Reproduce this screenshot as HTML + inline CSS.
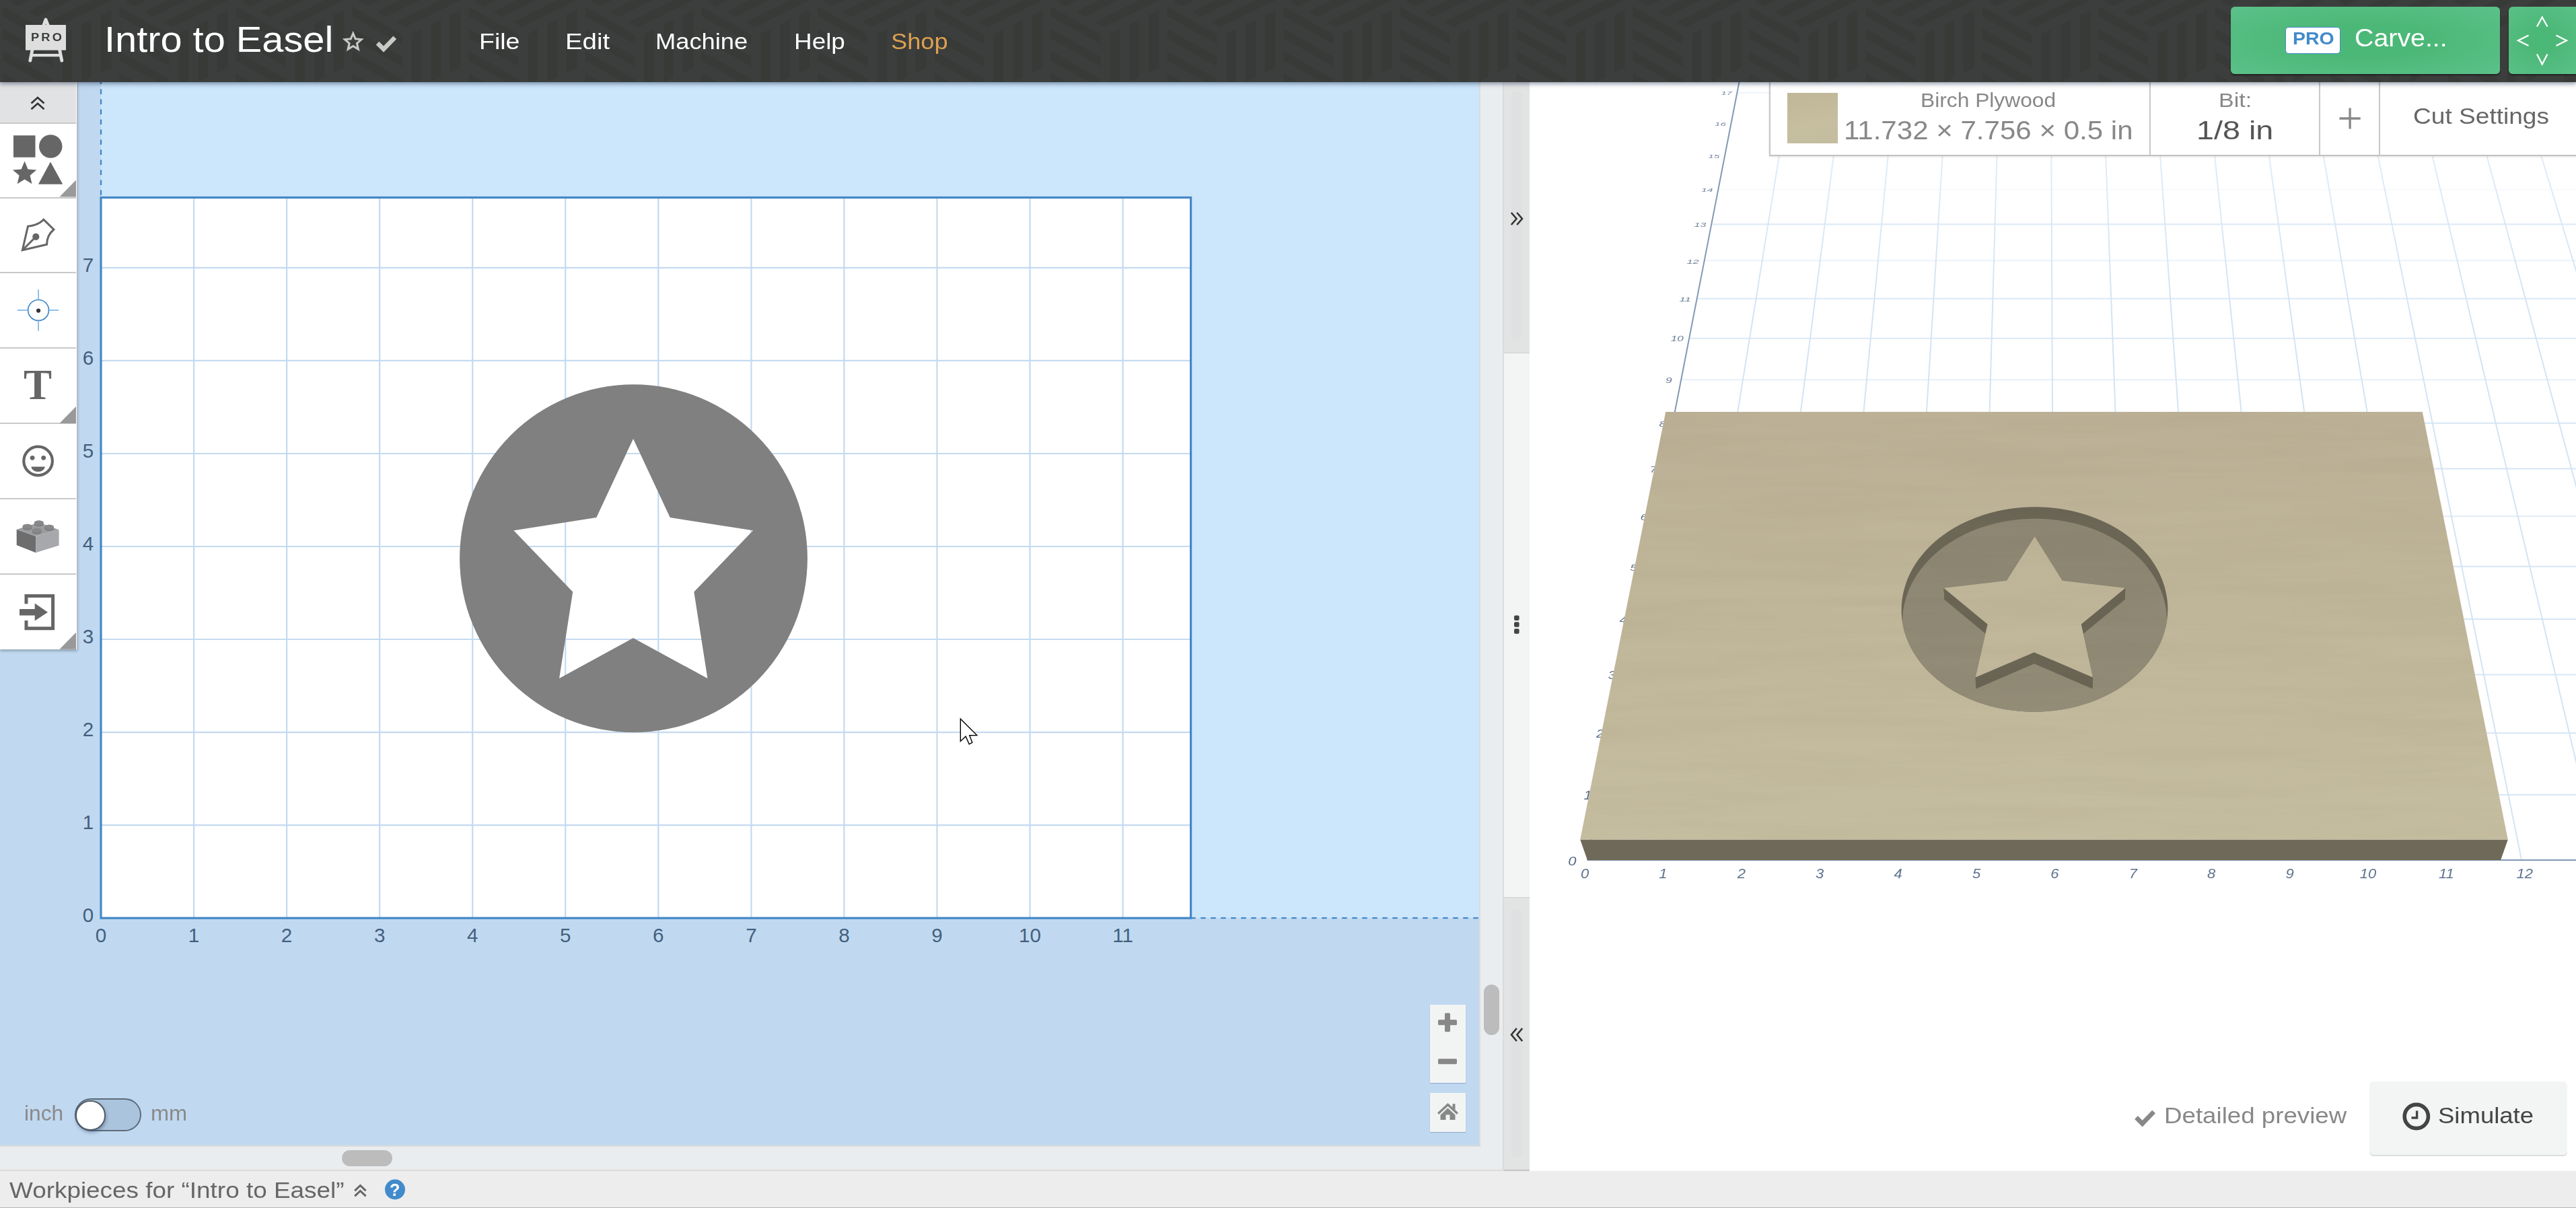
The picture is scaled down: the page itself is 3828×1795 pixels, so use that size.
<!DOCTYPE html>
<html><head><meta charset="utf-8"><title>Intro to Easel</title>
<style>
html,body{margin:0;padding:0}
body{width:3828px;height:1795px;position:relative;overflow:hidden;background:#fff;font-family:'Liberation Sans',sans-serif}
.t{position:absolute;white-space:nowrap;line-height:1;transform-origin:0 50%;display:inline-block}
.abs{position:absolute}

</style></head>
<body>
<svg id="design" style="position:absolute;left:0;top:122px" width="2199" height="1580" viewBox="0 122 2199 1580">
<rect x="0" y="122" width="2199" height="1580" fill="#cce6fb"/>
<rect x="0" y="122" width="150" height="1580" fill="#c0d9f0"/>
<rect x="0" y="1364.2" width="2199" height="337.8" fill="#c0d9f0"/>
<rect x="150.0" y="293.5" width="1619.6" height="1070.7" fill="#fff"/>
<path d="M288.1 293.5V1364.2M426.1 293.5V1364.2M564.2 293.5V1364.2M702.2 293.5V1364.2M840.2 293.5V1364.2M978.3 293.5V1364.2M1116.4 293.5V1364.2M1254.4 293.5V1364.2M1392.5 293.5V1364.2M1530.5 293.5V1364.2M1668.6 293.5V1364.2M150.0 1226.2H1769.6M150.0 1088.1H1769.6M150.0 950.0H1769.6M150.0 812.0H1769.6M150.0 674.0H1769.6M150.0 535.9H1769.6M150.0 397.8H1769.6" stroke="#c4daf0" stroke-width="2.2" fill="none"/>
<path fill="#808080" fill-rule="evenodd" d="M683.1 829.7a258.4 258.4 0 1 0 516.8 0a258.4 258.4 0 1 0 -516.8 0ZM941.0 651.9L995.7 769.0L1119.1 788.2L1031.3 879.4L1051.4 1008.1L941.0 948.1L831.1 1008.1L851.2 879.4L763.4 788.2L886.3 769.0Z"/>
<rect x="150.0" y="293.5" width="1619.6" height="1070.7" fill="none" stroke="#4487c7" stroke-width="3.2"/>
<path d="M150.0 122V293.5" stroke="#4487c7" stroke-width="2.3" stroke-dasharray="7.5 7.5" stroke-dashoffset="4.5" fill="none"/>
<path d="M1769.6 1364.2H2199" stroke="#4487c7" stroke-width="2.3" stroke-dasharray="7.5 7.5" stroke-dashoffset="0.4" fill="none"/>
<g font-family="Liberation Sans, sans-serif" font-size="29.6" fill="#44607f">
<g text-anchor="middle">
<text x="150.0" y="1400">0</text>
<text x="288.1" y="1400">1</text>
<text x="426.1" y="1400">2</text>
<text x="564.2" y="1400">3</text>
<text x="702.2" y="1400">4</text>
<text x="840.2" y="1400">5</text>
<text x="978.3" y="1400">6</text>
<text x="1116.4" y="1400">7</text>
<text x="1254.4" y="1400">8</text>
<text x="1392.5" y="1400">9</text>
<text x="1530.5" y="1400">10</text>
<text x="1668.6" y="1400">11</text>
</g><g text-anchor="end">
<text x="139.3" y="1370.4">0</text>
<text x="139.3" y="1232.4">1</text>
<text x="139.3" y="1094.3">2</text>
<text x="139.3" y="956.2">3</text>
<text x="139.3" y="818.2">4</text>
<text x="139.3" y="680.2">5</text>
<text x="139.3" y="542.1">6</text>
<text x="139.3" y="404.0">7</text>
</g></g>
<path d="M1427.3 1068.3V1101.5L1435.1 1094.2L1440.2 1105.8L1444.8 1103.5L1440.7 1092.7L1451.7 1092.5Z" fill="#fff" stroke="#000" stroke-width="1.4" stroke-linejoin="miter"/>
</svg>
<svg id="view3d" style="position:absolute;left:2273px;top:122px;filter:blur(0.6px)" width="1555" height="1618" viewBox="2273 122 1555 1618">
<defs>
<linearGradient id="wood" gradientUnits="userSpaceOnUse" x1="0" y1="612" x2="0" y2="1248"><stop offset="0" stop-color="#bbb095"/><stop offset="0.45" stop-color="#bfb599"/><stop offset="1" stop-color="#c5bda0"/></linearGradient>
<linearGradient id="pfloor" gradientUnits="userSpaceOnUse" x1="0" y1="770" x2="0" y2="1060"><stop offset="0" stop-color="#8b8471"/><stop offset="1" stop-color="#928b76"/></linearGradient>
<clipPath id="rimclip"><polygon points="3221.2,898.0 3220.4,890.1 3219.1,882.2 3217.3,874.4 3215.0,866.7 3212.2,859.2 3208.9,851.8 3205.1,844.5 3200.8,837.4 3196.1,830.6 3190.9,823.9 3185.3,817.5 3179.3,811.2 3172.9,805.3 3166.2,799.6 3159.1,794.2 3151.6,789.1 3143.8,784.3 3135.8,779.8 3127.5,775.7 3118.9,771.9 3110.1,768.4 3101.1,765.2 3091.8,762.4 3082.5,760.0 3073.0,758.0 3063.4,756.3 3053.6,755.0 3043.9,754.0 3034.0,753.4 3024.2,753.3 3014.3,753.4 3004.5,754.0 2994.7,755.0 2984.9,756.3 2975.3,758.0 2965.8,760.0 2956.4,762.4 2947.2,765.2 2938.1,768.4 2929.3,771.9 2920.7,775.7 2912.3,779.8 2904.2,784.3 2896.4,789.1 2888.9,794.2 2881.7,799.6 2874.9,805.3 2868.5,811.2 2862.4,817.5 2856.8,823.9 2851.5,830.6 2846.7,837.4 2842.4,844.5 2838.5,851.8 2835.1,859.2 2832.3,866.7 2829.9,874.4 2828.0,882.2 2826.7,890.1 2825.8,898.0 2825.6,906.0 2825.8,913.9 2826.7,921.9 2828.0,929.9 2829.9,937.8 2832.4,945.6 2835.4,953.4 2839.0,961.0 2843.1,968.5 2847.7,975.8 2852.8,983.0 2858.4,989.9 2864.6,996.6 2871.2,1003.0 2878.2,1009.2 2885.7,1015.1 2893.6,1020.7 2901.9,1025.9 2910.6,1030.8 2919.7,1035.3 2929.0,1039.5 2938.7,1043.2 2948.6,1046.5 2958.8,1049.5 2969.1,1051.9 2979.6,1054.0 2990.3,1055.6 3001.1,1056.7 3011.9,1057.4 3022.8,1057.7 3033.7,1057.4 3044.5,1056.7 3055.3,1055.6 3066.0,1054.0 3076.5,1051.9 3086.9,1049.5 3097.1,1046.5 3107.0,1043.2 3116.7,1039.5 3126.1,1035.3 3135.2,1030.8 3143.9,1025.9 3152.3,1020.7 3160.2,1015.1 3167.8,1009.2 3174.9,1003.0 3181.6,996.6 3187.7,989.9 3193.4,983.0 3198.6,975.8 3203.3,968.5 3207.5,961.0 3211.1,953.4 3214.2,945.6 3216.7,937.8 3218.7,929.9 3220.1,921.9 3221.0,913.9 3221.4,906.0"/></clipPath>
<clipPath id="topclip"><polygon points="2348.2,1247.5 3726.8,1247.5 3599.8,612.0 2475.2,612.0"/></clipPath>
<filter id="grain" x="0" y="0" width="100%" height="100%" color-interpolation-filters="sRGB"><feTurbulence type="fractalNoise" baseFrequency="0.0035 0.045" numOctaves="3" seed="7"/><feColorMatrix type="matrix" values="0 0 0 0 0.42  0 0 0 0 0.36  0 0 0 0 0.25  0.085 0 0 0 -0.03"/></filter>
<filter id="grain2" x="0" y="0" width="100%" height="100%" color-interpolation-filters="sRGB"><feTurbulence type="fractalNoise" baseFrequency="0.002 0.03" numOctaves="2" seed="11"/><feColorMatrix type="matrix" values="0 0 0 0 0.93  0 0 0 0 0.9  0 0 0 0 0.8  0.065 0 0 0 -0.026"/></filter>
<linearGradient id="fade" x1="0" y1="0" x2="0" y2="1"><stop offset="0" stop-color="#fff" stop-opacity="0.45"/><stop offset="1" stop-color="#fff" stop-opacity="0"/></linearGradient>
</defs>
<path d="M2474.5 1278.0L2673.1 51.1M2590.2 1278.0L2748.0 51.1M2705.9 1278.0L2822.9 51.1M2821.6 1278.0L2897.8 51.1M2937.3 1278.0L2972.7 51.1M3053.0 1278.0L3047.5 51.1M3168.7 1278.0L3122.4 51.1M3284.4 1278.0L3197.3 51.1M3400.1 1278.0L3272.2 51.1M3515.8 1278.0L3347.1 51.1M3631.5 1278.0L3421.9 51.1M3747.2 1278.0L3496.8 51.1M3862.8 1278.0L3571.7 51.1M3978.5 1278.0L3646.6 51.1M4094.2 1278.0L3721.4 51.1M4209.9 1278.0L3796.3 51.1M4325.6 1278.0L3871.2 51.1M4441.3 1278.0L3946.1 51.1M4557.0 1278.0L4021.0 51.1" stroke="#d4e4f4" stroke-width="2" fill="none"/>
<path d="M2377.8 1181.0L4514.6 1181.0" stroke="#d4e4f4" stroke-width="2" stroke-opacity="0.95" fill="none"/>
<path d="M2395.7 1089.3L4474.5 1089.3" stroke="#d4e4f4" stroke-width="2" stroke-opacity="0.95" fill="none"/>
<path d="M2412.6 1002.4L4436.6 1002.4" stroke="#d4e4f4" stroke-width="2" stroke-opacity="0.95" fill="none"/>
<path d="M2428.7 920.0L4400.6 920.0" stroke="#d4e4f4" stroke-width="2" stroke-opacity="0.95" fill="none"/>
<path d="M2444.0 841.7L4366.4 841.7" stroke="#d4e4f4" stroke-width="2" stroke-opacity="0.95" fill="none"/>
<path d="M2458.5 767.3L4333.9 767.3" stroke="#d4e4f4" stroke-width="2" stroke-opacity="0.70" fill="none"/>
<path d="M2472.3 696.4L4302.9 696.4" stroke="#d4e4f4" stroke-width="2" stroke-opacity="0.95" fill="none"/>
<path d="M2485.5 628.8L4273.4 628.8" stroke="#d4e4f4" stroke-width="2" stroke-opacity="0.95" fill="none"/>
<path d="M2498.1 564.3L4245.2 564.3" stroke="#d4e4f4" stroke-width="2" stroke-opacity="0.55" fill="none"/>
<path d="M2510.1 502.7L4218.3 502.7" stroke="#d4e4f4" stroke-width="2" stroke-opacity="0.85" fill="none"/>
<path d="M2521.6 443.8L4192.5 443.8" stroke="#d4e4f4" stroke-width="2" stroke-opacity="0.85" fill="none"/>
<path d="M2532.6 387.3L4167.9 387.3" stroke="#d4e4f4" stroke-width="2" stroke-opacity="0.50" fill="none"/>
<path d="M2543.2 333.3L4144.3 333.3" stroke="#d4e4f4" stroke-width="2" stroke-opacity="1.00" fill="none"/>
<path d="M2553.3 281.4L4121.6 281.4" stroke="#d4e4f4" stroke-width="2" stroke-opacity="0.25" fill="none"/>
<path d="M2581.3 137.9L4058.9 137.9" stroke="#d4e4f4" stroke-width="2" stroke-opacity="0.70" fill="none"/>
<rect x="2273" y="122" width="1555" height="330" fill="url(#fade)"/>
<path d="M2358.9 1278.0L2598.3 51.1M2358.9 1278.0L4557.0 1278.0" stroke="#8299b4" stroke-width="2" fill="none"/>
<g font-family="Liberation Sans, sans-serif" font-style="italic" fill="#4d6482" fill-opacity="0.9" text-anchor="middle">
<text transform="translate(2355.0 1305) scale(1 0.92)" font-size="22">0</text>
<text transform="translate(2471.4 1305) scale(1 0.92)" font-size="22">1</text>
<text transform="translate(2587.8 1305) scale(1 0.92)" font-size="22">2</text>
<text transform="translate(2704.2 1305) scale(1 0.92)" font-size="22">3</text>
<text transform="translate(2820.6 1305) scale(1 0.92)" font-size="22">4</text>
<text transform="translate(2937.0 1305) scale(1 0.92)" font-size="22">5</text>
<text transform="translate(3053.4 1305) scale(1 0.92)" font-size="22">6</text>
<text transform="translate(3169.8 1305) scale(1 0.92)" font-size="22">7</text>
<text transform="translate(3286.2 1305) scale(1 0.92)" font-size="22">8</text>
<text transform="translate(3402.6 1305) scale(1 0.92)" font-size="22">9</text>
<text transform="translate(3519.0 1305) scale(1 0.92)" font-size="22">10</text>
<text transform="translate(3635.4 1305) scale(1 0.92)" font-size="22">11</text>
<text transform="translate(3751.8 1305) scale(1 0.92)" font-size="22">12</text>
<text transform="translate(2336.4 1285.9) scale(1 0.87)" font-size="22.0" fill-opacity="0.95">0</text>
<text transform="translate(2359.4 1188.4) scale(1 0.84)" font-size="21.4" fill-opacity="0.94">1</text>
<text transform="translate(2377.8 1096.3) scale(1 0.80)" font-size="20.8" fill-opacity="0.92">2</text>
<text transform="translate(2395.3 1009.0) scale(1 0.77)" font-size="20.3" fill-opacity="0.91">3</text>
<text transform="translate(2411.9 926.3) scale(1 0.74)" font-size="19.7" fill-opacity="0.90">4</text>
<text transform="translate(2427.6 847.7) scale(1 0.71)" font-size="19.2" fill-opacity="0.89">5</text>
<text transform="translate(2442.6 772.9) scale(1 0.69)" font-size="18.8" fill-opacity="0.88">6</text>
<text transform="translate(2456.9 701.8) scale(1 0.66)" font-size="18.3" fill-opacity="0.87">7</text>
<text transform="translate(2470.4 633.9) scale(1 0.64)" font-size="17.9" fill-opacity="0.86">8</text>
<text transform="translate(2479.9 569.2) scale(1 0.61)" font-size="17.5" fill-opacity="0.85">9</text>
<text transform="translate(2492.3 507.3) scale(1 0.59)" font-size="17.1" fill-opacity="0.84">10</text>
<text transform="translate(2504.2 448.2) scale(1 0.57)" font-size="16.7" fill-opacity="0.83">11</text>
<text transform="translate(2515.5 391.6) scale(1 0.55)" font-size="16.4" fill-opacity="0.82">12</text>
<text transform="translate(2526.4 337.3) scale(1 0.53)" font-size="16.0" fill-opacity="0.81">13</text>
<text transform="translate(2536.8 285.3) scale(1 0.51)" font-size="15.7" fill-opacity="0.81">14</text>
<text transform="translate(2546.8 235.4) scale(1 0.49)" font-size="15.4" fill-opacity="0.80">15</text>
<text transform="translate(2556.5 187.4) scale(1 0.48)" font-size="15.1" fill-opacity="0.79">16</text>
<text transform="translate(2565.7 141.3) scale(1 0.46)" font-size="14.8" fill-opacity="0.79">17</text>
</g>
<polygon points="2348.2,1247.5 3726.8,1247.5 3716.1,1278.0 2358.9,1278.0" fill="#6e6958"/>
<polygon points="2348.2,1247.5 3726.8,1247.5 3599.8,612.0 2475.2,612.0" fill="url(#wood)"/>
<polygon points="3221.2,898.0 3220.4,890.1 3219.1,882.2 3217.3,874.4 3215.0,866.7 3212.2,859.2 3208.9,851.8 3205.1,844.5 3200.8,837.4 3196.1,830.6 3190.9,823.9 3185.3,817.5 3179.3,811.2 3172.9,805.3 3166.2,799.6 3159.1,794.2 3151.6,789.1 3143.8,784.3 3135.8,779.8 3127.5,775.7 3118.9,771.9 3110.1,768.4 3101.1,765.2 3091.8,762.4 3082.5,760.0 3073.0,758.0 3063.4,756.3 3053.6,755.0 3043.9,754.0 3034.0,753.4 3024.2,753.3 3014.3,753.4 3004.5,754.0 2994.7,755.0 2984.9,756.3 2975.3,758.0 2965.8,760.0 2956.4,762.4 2947.2,765.2 2938.1,768.4 2929.3,771.9 2920.7,775.7 2912.3,779.8 2904.2,784.3 2896.4,789.1 2888.9,794.2 2881.7,799.6 2874.9,805.3 2868.5,811.2 2862.4,817.5 2856.8,823.9 2851.5,830.6 2846.7,837.4 2842.4,844.5 2838.5,851.8 2835.1,859.2 2832.3,866.7 2829.9,874.4 2828.0,882.2 2826.7,890.1 2825.8,898.0 2825.6,906.0 2825.8,913.9 2826.7,921.9 2828.0,929.9 2829.9,937.8 2832.4,945.6 2835.4,953.4 2839.0,961.0 2843.1,968.5 2847.7,975.8 2852.8,983.0 2858.4,989.9 2864.6,996.6 2871.2,1003.0 2878.2,1009.2 2885.7,1015.1 2893.6,1020.7 2901.9,1025.9 2910.6,1030.8 2919.7,1035.3 2929.0,1039.5 2938.7,1043.2 2948.6,1046.5 2958.8,1049.5 2969.1,1051.9 2979.6,1054.0 2990.3,1055.6 3001.1,1056.7 3011.9,1057.4 3022.8,1057.7 3033.7,1057.4 3044.5,1056.7 3055.3,1055.6 3066.0,1054.0 3076.5,1051.9 3086.9,1049.5 3097.1,1046.5 3107.0,1043.2 3116.7,1039.5 3126.1,1035.3 3135.2,1030.8 3143.9,1025.9 3152.3,1020.7 3160.2,1015.1 3167.8,1009.2 3174.9,1003.0 3181.6,996.6 3187.7,989.9 3193.4,983.0 3198.6,975.8 3203.3,968.5 3207.5,961.0 3211.1,953.4 3214.2,945.6 3216.7,937.8 3218.7,929.9 3220.1,921.9 3221.0,913.9 3221.4,906.0" fill="#6a6454"/>
<g clip-path="url(#rimclip)">
<polygon points="3219.8,915.2 3219.1,907.3 3217.8,899.5 3216.0,891.7 3213.7,884.1 3210.9,876.5 3207.6,869.1 3203.9,861.9 3199.6,854.8 3194.9,847.9 3189.8,841.3 3184.3,834.8 3178.3,828.6 3172.0,822.7 3165.2,817.0 3158.2,811.6 3150.8,806.6 3143.1,801.8 3135.1,797.3 3126.8,793.1 3118.3,789.3 3109.5,785.8 3100.6,782.7 3091.5,779.9 3082.2,777.5 3072.7,775.4 3063.2,773.7 3053.5,772.4 3043.8,771.5 3034.0,770.9 3024.2,770.7 3014.5,770.9 3004.7,771.5 2995.0,772.4 2985.3,773.7 2975.7,775.4 2966.3,777.5 2957.0,779.9 2947.8,782.7 2938.8,785.8 2930.0,789.3 2921.5,793.1 2913.2,797.3 2905.1,801.8 2897.4,806.6 2890.0,811.6 2882.8,817.0 2876.1,822.7 2869.7,828.6 2863.7,834.8 2858.1,841.3 2852.9,847.9 2848.1,854.8 2843.8,861.9 2840.0,869.1 2836.6,876.5 2833.8,884.1 2831.4,891.7 2829.5,899.5 2828.2,907.3 2827.4,915.2 2827.2,923.2 2827.4,931.2 2828.2,939.1 2829.6,947.1 2831.5,955.0 2834.0,962.8 2837.0,970.5 2840.5,978.1 2844.5,985.6 2849.1,992.9 2854.2,1000.0 2859.8,1006.9 2865.9,1013.6 2872.4,1020.1 2879.4,1026.2 2886.9,1032.1 2894.7,1037.6 2903.0,1042.9 2911.6,1047.7 2920.6,1052.3 2929.9,1056.4 2939.5,1060.1 2949.3,1063.5 2959.4,1066.4 2969.6,1068.8 2980.1,1070.9 2990.7,1072.5 3001.3,1073.6 3012.1,1074.3 3022.9,1074.5 3033.7,1074.3 3044.4,1073.6 3055.1,1072.5 3065.7,1070.9 3076.2,1068.8 3086.5,1066.4 3096.6,1063.5 3106.5,1060.1 3116.1,1056.4 3125.4,1052.3 3134.4,1047.7 3143.1,1042.9 3151.4,1037.6 3159.3,1032.1 3166.8,1026.2 3173.8,1020.1 3180.4,1013.6 3186.6,1006.9 3192.2,1000.0 3197.4,992.9 3202.0,985.6 3206.2,978.1 3209.8,970.5 3212.8,962.8 3215.3,955.0 3217.3,947.1 3218.8,939.1 3219.6,931.2 3220.0,923.2" fill="url(#pfloor)"/>
<polygon points="3023.6,796.9 3064.6,862.7 3064.4,880.0 3023.7,814.3" fill="#696353"/>
<polygon points="3064.6,862.7 3158.4,873.8 3157.5,891.1 3064.4,880.0" fill="#696353"/>
<polygon points="3158.4,873.8 3092.7,927.5 3092.3,944.7 3157.5,891.1" fill="#696353"/>
<polygon points="3092.7,927.5 3110.0,1006.5 3109.5,1023.5 3092.3,944.7" fill="#696353"/>
<polygon points="3110.0,1006.5 3022.8,969.2 3022.9,986.3 3109.5,1023.5" fill="#696353"/>
<polygon points="3022.8,969.2 2935.6,1006.5 2936.4,1023.5 3022.9,986.3" fill="#696353"/>
<polygon points="2935.6,1006.5 2953.6,927.5 2954.3,944.7 2936.4,1023.5" fill="#696353"/>
<polygon points="2953.6,927.5 2888.4,873.8 2889.5,891.1 2954.3,944.7" fill="#696353"/>
<polygon points="2888.4,873.8 2981.9,862.7 2982.3,880.0 2889.5,891.1" fill="#696353"/>
<polygon points="2981.9,862.7 3023.6,796.9 3023.7,814.3 2982.3,880.0" fill="#696353"/>
</g>
<polygon points="3023.6,796.9 3064.6,862.7 3158.4,873.8 3092.7,927.5 3110.0,1006.5 3022.8,969.2 2935.6,1006.5 2953.6,927.5 2888.4,873.8 2981.9,862.7" fill="url(#wood)"/>
<g clip-path="url(#topclip)"><rect x="2340" y="606" width="1395" height="648" filter="url(#grain)"/><rect x="2340" y="606" width="1395" height="648" filter="url(#grain2)"/></g>
</svg>
<!-- scrollbars and gutters -->
<div class="abs" style="left:0;top:1702px;width:2235px;height:38px;background:#eaedf0;border-top:2px solid #dcdbd9;border-bottom:2px solid #dcdbd9;box-sizing:border-box"></div>
<div class="abs" style="left:508px;top:1709.3px;width:75px;height:23.4px;border-radius:12px;background:#bcbcbc"></div>
<div class="abs" style="left:2198px;top:122px;width:37px;height:1582px;background:#eaedf0;border-left:2px solid #dcdbd9;border-right:2px solid #dcdbd9;box-sizing:border-box"></div>
<div class="abs" style="left:2200px;top:1700px;width:33px;height:6px;background:#eaedf0"></div>
<div class="abs" style="left:2233px;top:1700px;width:2px;height:40px;background:#dcdbd9"></div>
<div class="abs" style="left:2205px;top:1463px;width:23px;height:75px;border-radius:12px;background:#bcbcbc"></div>
<div class="abs" style="left:2235px;top:122px;width:38px;height:1618px;background:#f3f4f4;border-bottom:2px solid #c4c4c4;box-sizing:border-box"></div>
<div class="abs" style="left:2235px;top:122px;width:38px;height:403px;background:#e2e3e3;border-bottom:1px solid #cfcfcf;box-sizing:border-box"></div>
<div class="abs" style="left:2235px;top:1333px;width:38px;height:405px;background:#e2e3e3;border-top:1px solid #cfcfcf;box-sizing:border-box"></div>
<div class="abs" style="left:2246px;top:135px;width:16px;height:370px;border-radius:8px;background:#dfe0e1"></div>
<div class="abs" style="left:2246px;top:1350px;width:16px;height:370px;border-radius:8px;background:#dfe0e1"></div>
<!-- bottom bar -->
<div class="abs" style="left:0;top:1740px;width:3828px;height:55px;background:#ededed;border-bottom:1.3px solid #b5b5b5;box-sizing:border-box"></div>
<!-- material toolbar -->
<div class="abs" style="left:2629px;top:122px;width:1199px;height:110px;background:#fff;border-left:2px solid #c6c6c6;border-bottom:2px solid #c2c2c2;box-sizing:border-box;box-shadow:0 1px 3px rgba(0,0,0,.12)"></div>
<div class="abs" style="left:2656px;top:138px;width:75px;height:75px;background:linear-gradient(170deg,#c0b698,#c6be9f 60%,#c4bc9f)"></div>
<div class="abs" style="left:3194px;top:122px;width:2px;height:108px;background:#c8c8c8"></div>
<div class="abs" style="left:3446px;top:122px;width:2px;height:108px;background:#c8c8c8"></div>
<div class="abs" style="left:3535px;top:122px;width:2px;height:108px;background:#c8c8c8"></div>
<!-- zoom controls -->
<div class="abs" style="left:2125px;top:1493px;width:53px;height:116px;background:#f2f4f4;box-shadow:0 1px 1px rgba(120,150,190,.6)"></div>
<div class="abs" style="left:2125px;top:1624px;width:53px;height:58px;background:#f2f4f4;box-shadow:0 1px 1px rgba(120,150,190,.6)"></div>
<!-- unit toggle -->
<div class="abs" style="left:111px;top:1632px;width:99px;height:49px;border-radius:25px;background:#abc4de;border:2px solid #5d6b7a;box-sizing:border-box"></div>
<div class="abs" style="left:112px;top:1635px;width:44.5px;height:44.5px;border-radius:50%;background:#fff;border:2.5px solid #505a66;box-sizing:border-box;box-shadow:1px 3px 5px rgba(60,80,110,.45)"></div>
<!-- simulate button -->
<div class="abs" style="left:3521px;top:1607px;width:294px;height:109px;border-radius:6px;background:#f3f5f5;box-shadow:0 2px 0 #dcdddd"></div>
<!-- sidebar -->
<div class="abs" style="left:0;top:122px;width:114.6px;height:843px;background:#fff;border-right:1.6px solid #bdbdbd;box-sizing:border-box;box-shadow:0 2px 4px rgba(0,0,0,.3)">
<div class="abs" style="left:0;top:0;width:113px;height:62px;background:#e1e2e3;border-bottom:2px solid #c9c9c9;box-sizing:border-box"></div>
<div class="abs" style="left:0;top:170.5px;width:113px;height:2px;background:#c9c9c9"></div>
<div class="abs" style="left:0;top:282px;width:113px;height:2px;background:#c9c9c9"></div>
<div class="abs" style="left:0;top:394px;width:113px;height:2px;background:#c9c9c9"></div>
<div class="abs" style="left:0;top:506px;width:113px;height:2px;background:#c9c9c9"></div>
<div class="abs" style="left:0;top:618px;width:113px;height:2px;background:#c9c9c9"></div>
<div class="abs" style="left:0;top:730px;width:113px;height:2px;background:#c9c9c9"></div>
</div>
<!-- header -->
<div id="header" class="abs" style="left:0;top:0;width:3828px;height:121.5px;background:#3c3e3d;box-shadow:0 1px 7px 1px rgba(20,40,70,.55);overflow:visible">
<svg class="abs" style="left:0;top:0" width="3828" height="121.5" viewBox="0 0 3828 121.5">
<defs>
<clipPath id="hcd"><path d="M91.6 0.8L173 46.6V122H91.6Z"/></clipPath>
<clipPath id="hct0"><path d="M0.0 41.6L82.0 1.2L3.6 -41.1L-78.0 -0.7Z"/></clipPath>
<clipPath id="hct1"><path d="M173.0 41.6L255.0 1.2L176.6 -41.1L95.0 -0.7Z"/></clipPath>
<pattern id="hp" width="173" height="400" patternUnits="userSpaceOnUse" patternTransform="translate(85.5 0)">
<g fill="#383a38"><path d="M7.0 50.2L21.7 43.0L21.7 129.4L7.0 136.6ZM35.7 36.1L50.5 28.9L50.5 115.3L35.7 122.5ZM63.7 22.4L80.0 14.4L80.0 100.8L63.7 108.8Z"/><path clip-path="url(#hcd)" d="M91.6 -23.7L166.0 18.2L166.0 32.9L91.6 -8.9ZM91.6 9.3L166.0 51.2L166.0 65.9L91.6 24.1ZM91.6 42.3L166.0 84.2L166.0 98.9L91.6 57.0ZM91.6 75.3L166.0 117.2L166.0 131.9L91.6 90.0ZM91.6 108.3L166.0 150.2L166.0 164.9L91.6 123.0Z"/><path clip-path="url(#hct0)" d="M-90.0 83.7L95.0 -6.9L95.0 -21.7L-90.0 69.0ZM-90.0 54.2L95.0 -36.4L95.0 -51.2L-90.0 39.5ZM-90.0 24.7L95.0 -65.9L95.0 -80.7L-90.0 10.0Z"/><path clip-path="url(#hct1)" d="M83.0 83.7L268.0 -6.9L268.0 -21.7L83.0 69.0ZM83.0 54.2L268.0 -36.4L268.0 -51.2L83.0 39.5ZM83.0 24.7L268.0 -65.9L268.0 -80.7L83.0 10.0Z"/></g>
</pattern></defs>
<rect width="3828" height="121.5" fill="url(#hp)"/>
</svg>
<div class="abs" style="left:3315px;top:10px;width:400px;height:100px;border-radius:6px;background:radial-gradient(ellipse at center,#4cb877 35%,#5bc189 100%);box-shadow:0 2px 2px rgba(0,0,0,.45)"></div>
<div class="abs" style="left:3728px;top:10px;width:110px;height:100px;border-radius:6px;background:radial-gradient(ellipse at 45% 50%,#4cb877 25%,#5bc189 100%);box-shadow:0 2px 2px rgba(0,0,0,.45)"></div>
<div class="abs" style="left:3396px;top:39.5px;width:82px;height:40px;border-radius:5px;background:#fff;border:1.5px solid #4a8ccc;box-sizing:border-box"></div>
</div>

<svg id="icons" class="abs" style="left:0;top:0" width="3828" height="1795" viewBox="0 0 3828 1795" fill="none">
<g id="logo"><rect x="38" y="37" width="60" height="37.6" fill="#dedede"/><path d="M64.6 38L68 28.8L71.6 38" stroke="#dedede" stroke-width="4.6" stroke-linejoin="round" stroke-linecap="round"/><path d="M48 74L44.8 90M88.6 74L91.8 90" stroke="#dedede" stroke-width="4.8" stroke-linecap="round"/><rect x="47" y="80" width="42" height="4.2" fill="#dedede"/></g>
<path d="M524.75 49.60L528.22 57.83L537.11 58.58L530.36 64.42L532.39 73.12L524.75 68.50L517.11 73.12L519.14 64.42L512.39 58.58L521.28 57.83Z" stroke="#c9c9c5" stroke-width="3" stroke-linejoin="miter"/>
<path d="M561 64.2L570 73L586.8 55.8" stroke="#c9c9c5" stroke-width="6.6" stroke-linejoin="miter"/>
<path d="M3770 39.5L3777.75 25.5L3785.5 39.5M3757.5 52.5L3742 60.25L3757.5 68M3798.5 52.5L3814 60.25L3798.5 68M3770 80.5L3777.75 95.5L3785.5 80.5" stroke="#fff" stroke-width="2.3"/>
<path d="M3476.5 176H3507.7M3492.1 160.5V191.5" stroke="#888" stroke-width="3.3"/>
<path d="M46.5 153.5L56 145L65.5 153.5M46.5 162.3L56 153.8L65.5 162.3" stroke="#333" stroke-width="2.6"/>
<g fill="#666"><rect x="20" y="201.25" width="32.5" height="32.5"/><circle cx="75.25" cy="217.5" r="17.25"/><path d="M36.60 239.60L41.54 251.40L54.29 252.45L44.59 260.80L47.53 273.25L36.60 266.60L25.67 273.25L28.61 260.80L18.91 252.45L31.66 251.40Z"/><path d="M75 240.5L57 273.75H93.25Z"/></g>
<path d="M88.5 292.5H113V267.5Z" fill="#999"/>
<path d="M88.5 629.0H113V604.0Z" fill="#999"/>
<path d="M88.5 964.7H113V939.7Z" fill="#999"/>
<g stroke="#666" stroke-width="3" stroke-linejoin="miter"><path d="M33.3 371.8L41.5 336.2C47 336 58 333.5 64.7 326.2L79.9 341C73 347 69.5 353 69.5 363.3Z"/><path d="M33.8 371.3L53.3 351.8" stroke-width="3"/><circle cx="53.3" cy="351.8" r="5.1" fill="#666" stroke="none"/></g>
<circle cx="57.1" cy="460.9" r="15.4" stroke="#3f86c8" stroke-width="1.7"/><path d="M26 460.9H41.5M72.8 460.9H87M57.1 430.2V445.3M57.1 476.6V491.7" stroke="#7fb7e6" stroke-width="1.7"/><circle cx="57.1" cy="461.6" r="3.1" fill="#333"/>
<circle cx="56.6" cy="685" r="21.3" stroke="#666" stroke-width="4.2"/><circle cx="48.1" cy="680.3" r="3.4" fill="#666"/><circle cx="64.7" cy="680.3" r="3.4" fill="#666"/><path d="M46.4 693.6H66.8A10.2 7.4 0 0 1 46.4 693.6Z" fill="#666"/>
<g id="lego"><path d="M24.7 786.7L53.1 796.8V821.2L24.7 810Z" fill="#6d6d6e"/><path d="M53.1 796.8L87.6 787.3V810.4L53.1 821.2Z" fill="#a6a8ab"/><path d="M24.7 786.7L57.8 776.6L87.6 787.3L53.1 796.8Z" fill="#9b9d9f"/>
<path d="M33.6 784.5v-2.4a7 3.4 0 0 1 14 0v2.4a7 3.4 0 0 1 -14 0Z" fill="#7e7f80"/><ellipse cx="40.6" cy="782.1" rx="7" ry="3.4" fill="#88898b"/>
<path d="M50.8 779.2v-2.4a7 3.4 0 0 1 14 0v2.4a7 3.4 0 0 1 -14 0Z" fill="#7e7f80"/><ellipse cx="57.8" cy="776.8" rx="7" ry="3.4" fill="#88898b"/>
<path d="M66.0 785.5v-2.4a7 3.4 0 0 1 14 0v2.4a7 3.4 0 0 1 -14 0Z" fill="#7e7f80"/><ellipse cx="73.0" cy="783.1" rx="7" ry="3.4" fill="#88898b"/>
<path d="M47.7 790.5v-2.4a7 3.4 0 0 1 14 0v2.4a7 3.4 0 0 1 -14 0Z" fill="#7e7f80"/><ellipse cx="54.7" cy="788.1" rx="7" ry="3.4" fill="#88898b"/>
</g>
<path d="M39 897.2V885.5H78.6V933.8H39V922" stroke="#666" stroke-width="5"/><path d="M29 905H51.7V896.6L71 909.7L51.7 922.6V914.4H29Z" fill="#666"/>
<path d="M2245.8 316L2253.6 325L2245.8 334M2254.2 316L2262 325L2254.2 334" stroke="#333" stroke-width="2.6"/>
<path d="M2262.2 1528L2254.4 1537.5L2262.2 1547M2253.8 1528L2246 1537.5L2253.8 1547" stroke="#333" stroke-width="2.6"/>
<rect x="2250" y="914.4" width="7.6" height="7.5" rx="2" fill="#444"/>
<rect x="2250" y="924.3" width="7.6" height="7.5" rx="2" fill="#444"/>
<rect x="2250" y="934.2" width="7.6" height="7.5" rx="2" fill="#444"/>
<g fill="#888"><rect x="2137" y="1515.3" width="28" height="8" rx="1.6"/><rect x="2147" y="1505.3" width="8" height="28" rx="1.6"/><rect x="2137" y="1573.2" width="28" height="8" rx="1.6"/><path d="M2151.5 1639L2136 1653.5L2138.3 1656L2151.5 1643.8L2164.7 1656L2167 1653.5L2162.5 1649.2V1640.3H2158.5V1645.5Z"/><path d="M2151.5 1646.5L2140.5 1656.7V1664H2148.5V1656.5H2154.5V1664H2162.5V1656.7Z"/></g>
<path d="M527.2 1769.3L535.4 1761.5L543.6 1769.3M527.2 1777.3L535.4 1769.5L543.6 1777.3" stroke="#666" stroke-width="3"/>
<circle cx="587" cy="1767.5" r="15" fill="#428bca"/>
<circle cx="3590.8" cy="1659" r="17.6" stroke="#444" stroke-width="5.6"/><path d="M3591.6 1650.5V1661H3583.5" stroke="#444" stroke-width="3.4"/>
<path d="M3174.5 1660.5L3183.6 1669.6L3200.6 1652" stroke="#888" stroke-width="6.8" stroke-linejoin="miter"/>
</svg>
<span id="title" class="t" style="left:154.86px;top:31.89px;font-size:53.00px;color:#fff;font-family:'Liberation Sans',sans-serif;transform:scaleX(1.0895);">Intro to Easel</span>
<span id="mfile" class="t" style="left:711.74px;top:45.31px;font-size:33.60px;color:#fff;font-family:'Liberation Sans',sans-serif;transform:scaleX(1.1162);">File</span>
<span id="medit" class="t" style="left:840.34px;top:45.31px;font-size:33.60px;color:#fff;font-family:'Liberation Sans',sans-serif;transform:scaleX(1.1440);">Edit</span>
<span id="mmach" class="t" style="left:973.89px;top:45.31px;font-size:33.60px;color:#fff;font-family:'Liberation Sans',sans-serif;transform:scaleX(1.0804);">Machine</span>
<span id="mhelp" class="t" style="left:1179.78px;top:45.31px;font-size:33.60px;color:#fff;font-family:'Liberation Sans',sans-serif;transform:scaleX(1.0981);">Help</span>
<span id="mshop" class="t" style="left:1324.43px;top:45.31px;font-size:33.60px;color:#dea050;font-family:'Liberation Sans',sans-serif;transform:scaleX(1.0793);">Shop</span>
<span id="logopro" class="t" style="left:45.82px;top:47.34px;font-size:17.20px;color:#3b3d3c;font-family:'Liberation Sans',sans-serif;transform:scaleX(1.0611);font-weight:bold;letter-spacing:3px;">PRO</span>
<span id="badgepro" class="t" style="left:3406.88px;top:44.83px;font-size:25.60px;color:#428bca;font-family:'Liberation Sans',sans-serif;transform:scaleX(1.1122);font-weight:bold;">PRO</span>
<span id="carve" class="t" style="left:3498.92px;top:37.93px;font-size:37.00px;color:#fff;font-family:'Liberation Sans',sans-serif;transform:scaleX(1.0631);">Carve...</span>
<span id="birch" class="t" style="left:2853.92px;top:134.87px;font-size:28.80px;color:#888;font-family:'Liberation Sans',sans-serif;transform:scaleX(1.1023);">Birch Plywood</span>
<span id="dims" class="t" style="left:2740.46px;top:173.99px;font-size:39.00px;color:#888;font-family:'Liberation Sans',sans-serif;transform:scaleX(1.0785);">11.732 × 7.756 × 0.5 in</span>
<span id="bit" class="t" style="left:3297.23px;top:134.87px;font-size:28.80px;color:#888;font-family:'Liberation Sans',sans-serif;transform:scaleX(1.1795);">Bit:</span>
<span id="bitv" class="t" style="left:3264.31px;top:173.99px;font-size:39.00px;color:#555;font-family:'Liberation Sans',sans-serif;transform:scaleX(1.1986);">1/8 in</span>
<span id="cuts" class="t" style="left:3585.97px;top:156.06px;font-size:33.60px;color:#666;font-family:'Liberation Sans',sans-serif;transform:scaleX(1.1046);">Cut Settings</span>
<span id="inch" class="t" style="left:36.35px;top:1639.18px;font-size:30.50px;color:#8a8a8a;font-family:'Liberation Sans',sans-serif;transform:scaleX(1.0408);">inch</span>
<span id="mm" class="t" style="left:224.37px;top:1639.18px;font-size:30.50px;color:#8a8a8a;font-family:'Liberation Sans',sans-serif;transform:scaleX(1.0675);">mm</span>
<span id="workp" class="t" style="left:13.50px;top:1751.57px;font-size:33.00px;color:#666;font-family:'Liberation Sans',sans-serif;transform:scaleX(1.1178);">Workpieces for “Intro to Easel”</span>
<span id="detail" class="t" style="left:3215.97px;top:1641.40px;font-size:33.20px;color:#888;font-family:'Liberation Sans',sans-serif;transform:scaleX(1.1055);">Detailed preview</span>
<span id="simul" class="t" style="left:3622.96px;top:1641.40px;font-size:33.20px;color:#444;font-family:'Liberation Sans',sans-serif;transform:scaleX(1.1002);">Simulate</span>
<span id="ticon" class="t" style="left:35.33px;top:540.94px;font-size:63.00px;color:#666;font-family:'Liberation Serif',serif;transform:scaleX(1.0018);font-weight:bold;">T</span>
<span id="qmark" class="t" style="left:578.73px;top:1754.99px;font-size:26.00px;color:#fff;font-family:'Liberation Sans',sans-serif;transform:scaleX(0.9668);font-weight:bold;">?</span>
</body></html>
